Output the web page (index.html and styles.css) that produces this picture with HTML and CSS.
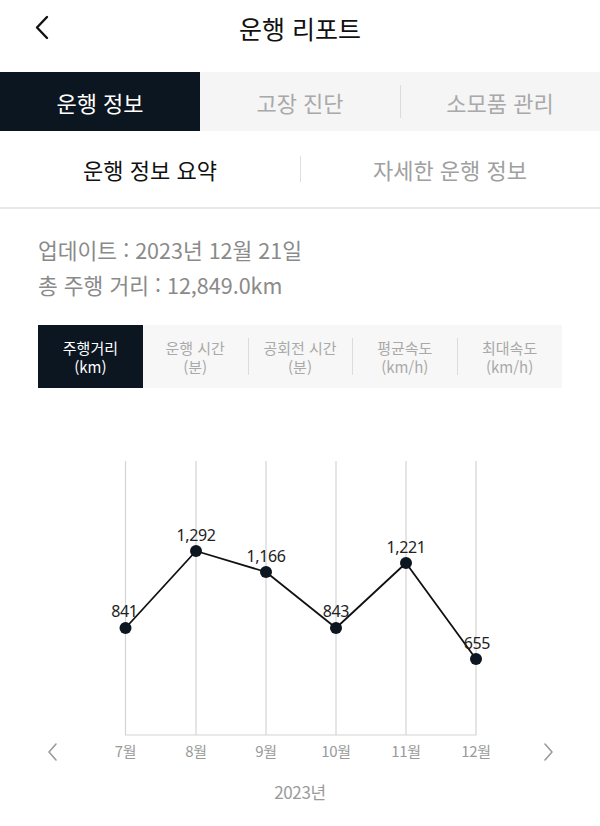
FILE: index.html
```html
<!DOCTYPE html>
<html lang="ko">
<head>
<meta charset="utf-8">
<link rel="stylesheet" href="styles.css">
</head>
<body>
<header class="header">
  <svg class="back" width="20" height="30" viewBox="0 0 20 30"><polyline points="14,4 4,14.5 14,25" fill="none" stroke="#111" stroke-width="2.4" stroke-linecap="round" stroke-linejoin="round"/></svg>
  <h1 class="title">운행 리포트</h1>
</header>
<nav class="tabs">
  <div class="tab active">운행 정보</div>
  <div class="tab">고장 진단</div>
  <div class="tab divided">소모품 관리</div>
</nav>
<nav class="subtabs">
  <div class="subtab active">운행 정보 요약</div>
  <div class="subtab divided">자세한 운행 정보</div>
</nav>
<section class="info">
  <p>업데이트 : 2023년 12월 21일</p>
  <p>총 주행 거리 : 12,849.0km</p>
</section>
<div class="metrics">
  <div class="metric active"><span>주행거리</span><span>(km)</span></div>
  <div class="metric"><span>운행 시간</span><span>(분)</span></div>
  <div class="metric divided"><span>공회전 시간</span><span>(분)</span></div>
  <div class="metric divided"><span>평균속도</span><span>(km/h)</span></div>
  <div class="metric divided"><span>최대속도</span><span>(km/h)</span></div>
</div>
<svg class="chart" width="600" height="438" viewBox="0 0 600 438">
  <g stroke="#d4d4d4" stroke-width="1.2">
    <line x1="125.5" y1="73" x2="125.5" y2="347"/>
    <line x1="196" y1="73" x2="196" y2="347"/>
    <line x1="266" y1="73" x2="266" y2="347"/>
    <line x1="336" y1="73" x2="336" y2="347"/>
    <line x1="406" y1="73" x2="406" y2="347"/>
    <line x1="476" y1="73" x2="476" y2="347"/>
    <line x1="125" y1="347" x2="476.5" y2="347"/>
  </g>
  <polyline points="125.5,240 196,163 266,184 336,240 406,175 476,271" fill="none" stroke="#111" stroke-width="1.8" stroke-linejoin="round"/>
  <g fill="#0c1621">
    <circle cx="125.5" cy="240" r="6"/>
    <circle cx="196" cy="163" r="6"/>
    <circle cx="266" cy="184" r="6"/>
    <circle cx="336" cy="240" r="6"/>
    <circle cx="406" cy="175" r="6"/>
    <circle cx="476" cy="271" r="6"/>
  </g>
  <g class="vlabel" text-anchor="middle">
    <text x="124.5" y="229">841</text>
    <text x="196" y="153">1,292</text>
    <text x="266" y="174">1,166</text>
    <text x="336" y="229">843</text>
    <text x="406" y="165">1,221</text>
    <text x="477" y="261">655</text>
  </g>
  <g class="xlabel" text-anchor="middle">
    <text x="125.5" y="369">7월</text>
    <text x="196" y="369">8월</text>
    <text x="266" y="369">9월</text>
    <text x="336" y="369">10월</text>
    <text x="406" y="369">11월</text>
    <text x="476" y="369">12월</text>
  </g>
  <polyline points="56,356 49,364 56,372" fill="none" stroke="#9a9a9a" stroke-width="1.6" stroke-linecap="round" stroke-linejoin="round"/>
  <polyline points="545,356 552,364 545,372" fill="none" stroke="#9a9a9a" stroke-width="1.6" stroke-linecap="round" stroke-linejoin="round"/>
  <text class="year" x="300" y="411" text-anchor="middle">2023년</text>
</svg>
</body>
</html>
```

FILE: styles.css
```css
* { box-sizing: border-box; }
html, body {
  margin: 0;
  padding: 0;
  background: #fff;
}
body {
  width: 600px;
  font-family: "Noto Sans CJK KR", "Noto Sans", sans-serif;
  color: #111;
}
.header {
  position: relative;
  height: 56px;
  display: flex;
  align-items: center;
  justify-content: center;
}
.back {
  position: absolute;
  left: 33px;
  top: 13px;
}
.title {
  margin: 0;
  font-size: 25px;
  font-weight: 400;
  line-height: 56px;
  color: #111;
}
.tabs {
  margin-top: 16px;
  height: 59px;
  display: flex;
  background: #f5f5f5;
}
.tab {
  flex: 1;
  display: flex;
  align-items: center;
  justify-content: center;
  font-size: 22px;
  color: #a9a9a9;
  position: relative;
}
.tab.active {
  background: #0c1621;
  color: #fff;
}
.tab.divided::before {
  content: "";
  position: absolute;
  left: 0;
  top: 13px;
  bottom: 13px;
  width: 1px;
  background: #dcdcdc;
}
.subtabs {
  height: 78px;
  display: flex;
  border-bottom: 2px solid #e8e8e8;
}
.subtab {
  flex: 1;
  display: flex;
  align-items: center;
  justify-content: center;
  font-size: 22px;
  color: #a0a0a0;
  position: relative;
}
.subtab.active {
  color: #111;
}
.subtab.divided::before {
  content: "";
  position: absolute;
  left: 0;
  top: 25px;
  height: 26px;
  width: 1px;
  background: #dedede;
}
.info {
  padding: 23px 0 0 38px;
}
.info p {
  margin: 0;
  font-size: 21.5px;
  line-height: 35px;
  color: #8a8a8a;
}
.metrics {
  margin: 23px 38px 0 38px;
  height: 63px;
  display: flex;
  background: #f7f7f7;
}
.metric {
  flex: 1;
  display: flex;
  flex-direction: column;
  align-items: center;
  justify-content: center;
  text-align: center;
  font-size: 15px;
  line-height: 20px;
  color: #a9a9a9;
  position: relative;
}
.metric span {
  display: block;
  height: 19px;
}
.metric.active {
  background: #0c1621;
  color: #fff;
}
.metric.divided::before {
  content: "";
  position: absolute;
  left: 0;
  top: 13px;
  bottom: 13px;
  width: 1px;
  background: #dcdcdc;
}
.chart {
  display: block;
}
.vlabel {
  font-family: "Noto Sans", sans-serif;
  font-size: 16px;
  fill: #222;
  letter-spacing: -0.4px;
}
.xlabel {
  font-family: "Noto Sans CJK KR", "Noto Sans", sans-serif;
  font-size: 15px;
  fill: #9a9a9a;
  letter-spacing: -0.4px;
}
.year {
  font-family: "Noto Sans CJK KR", "Noto Sans", sans-serif;
  font-size: 17px;
  fill: #9a9a9a;
  letter-spacing: -0.4px;
}
```
